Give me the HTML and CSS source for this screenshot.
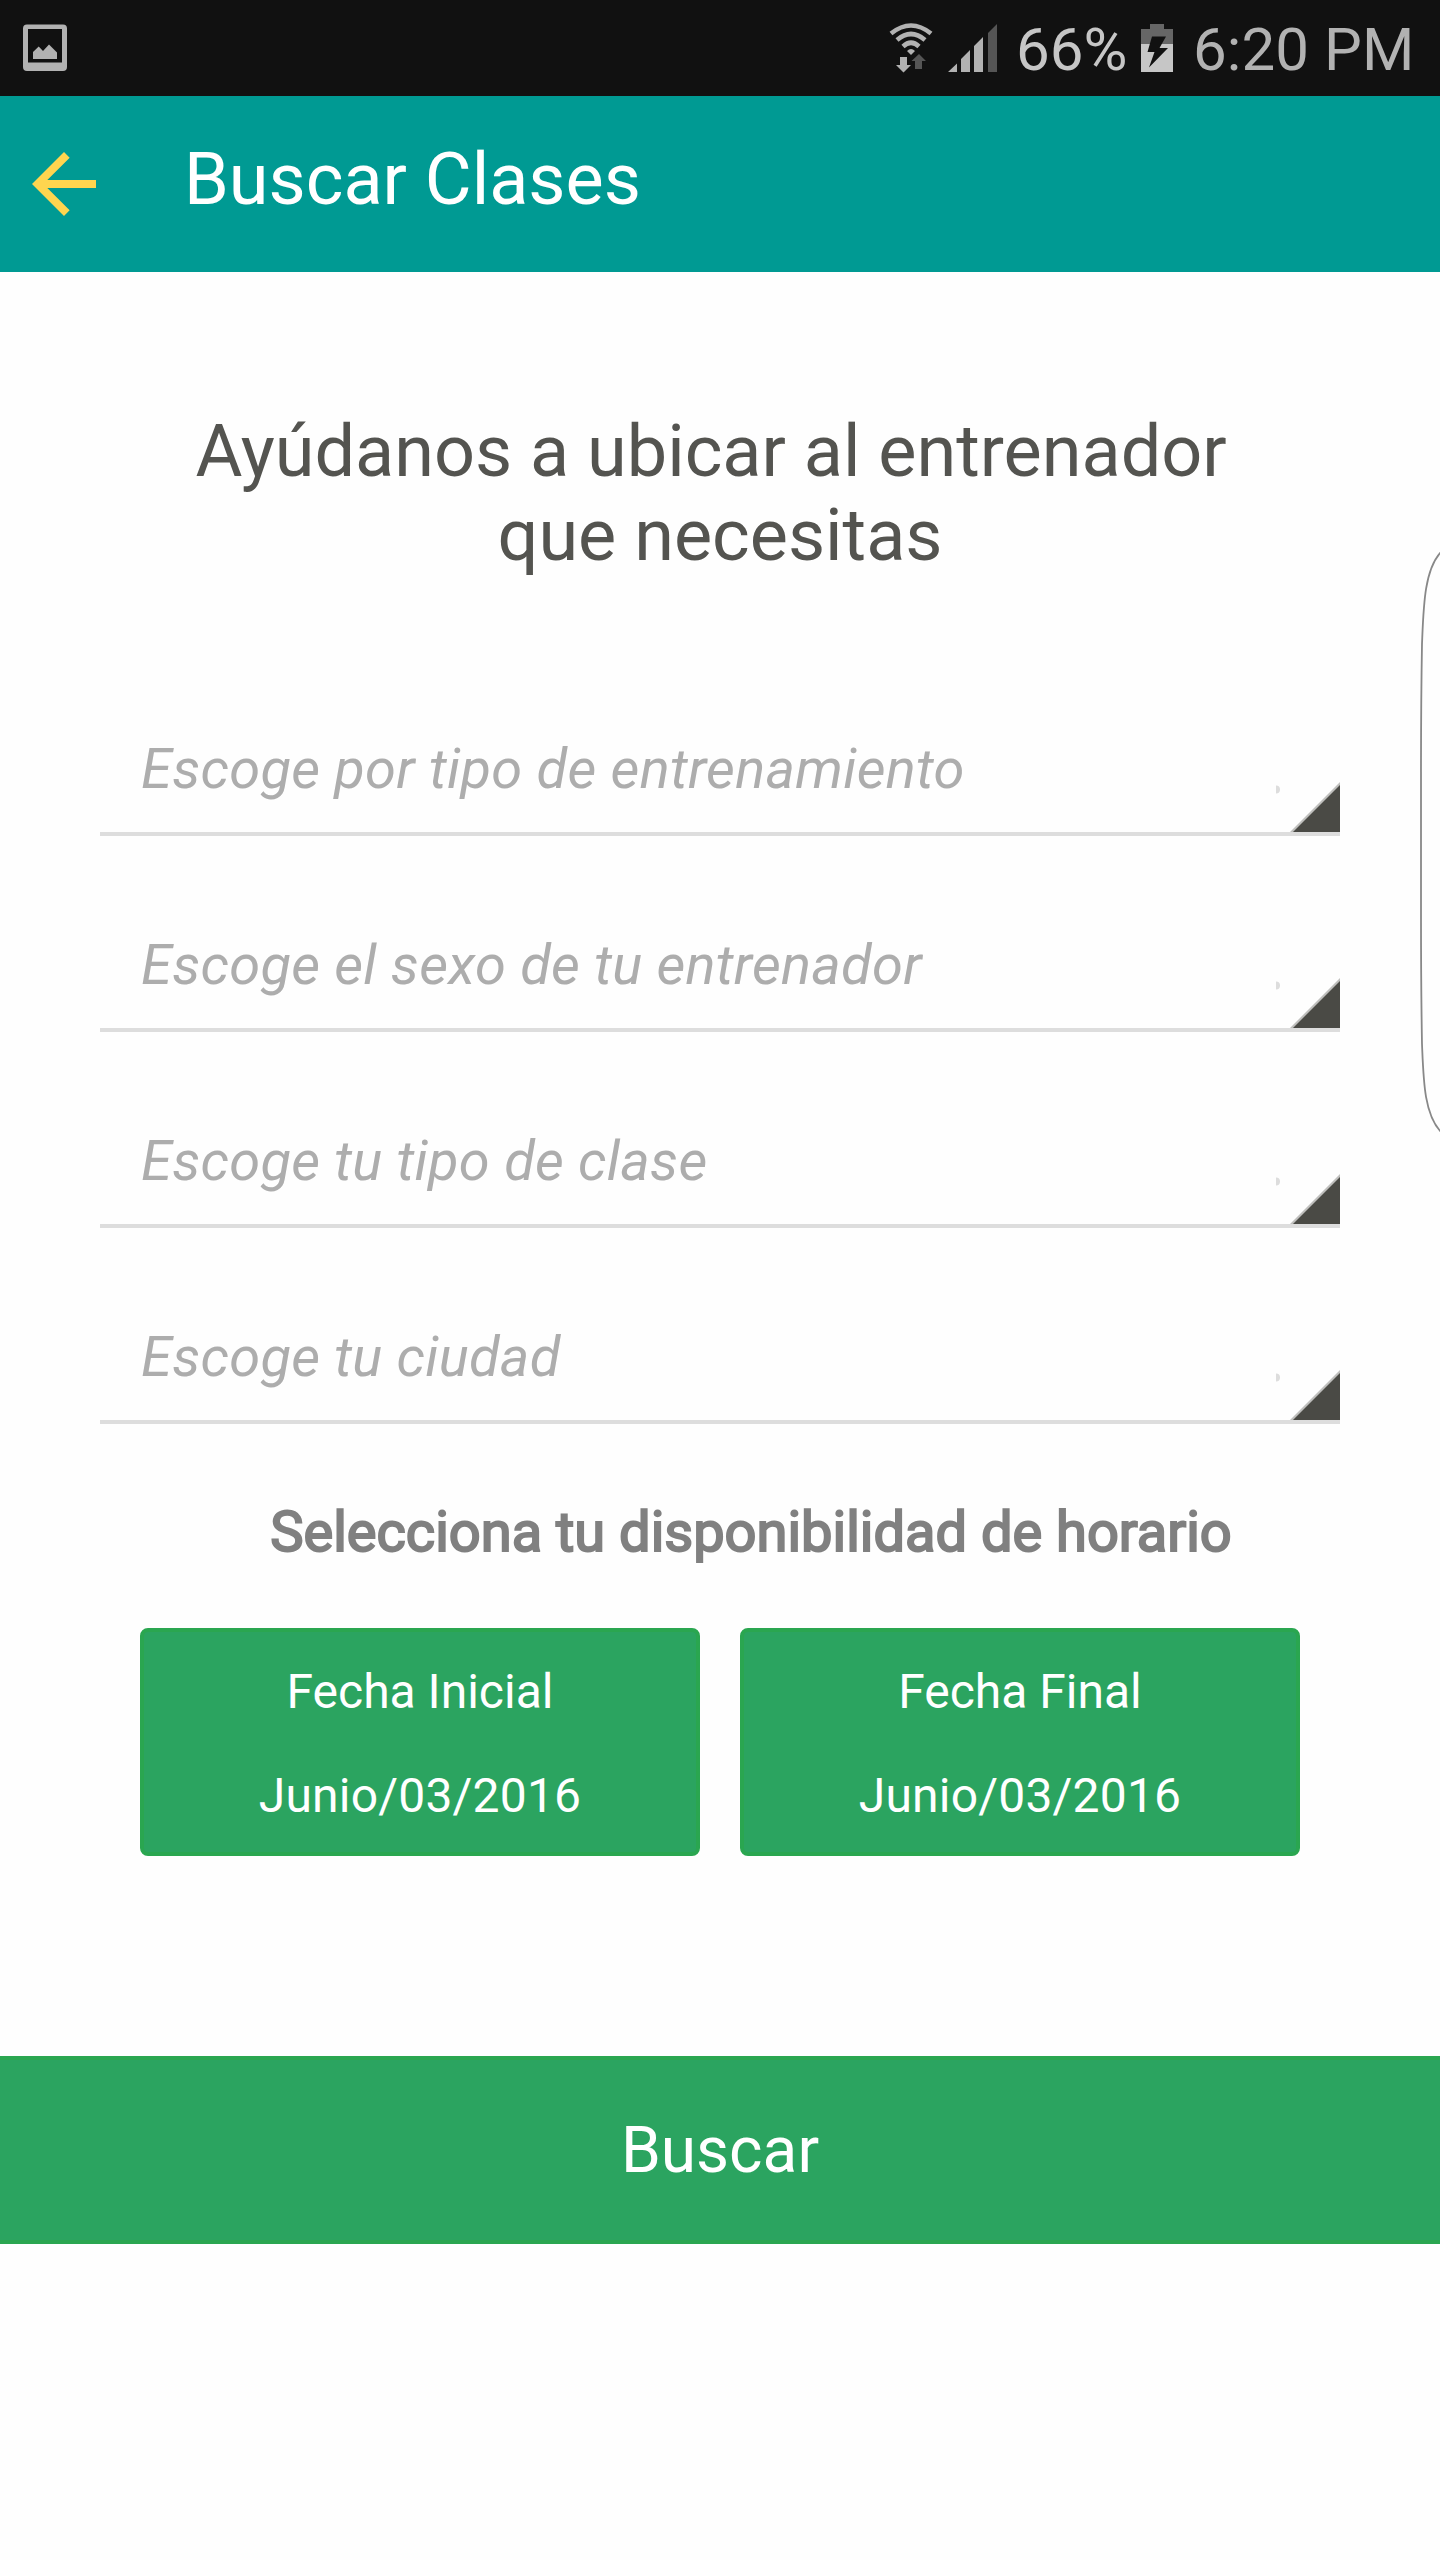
FILE: index.html
```html
<!DOCTYPE html>
<html lang="es">
<head>
<meta charset="utf-8">
<title>Buscar Clases</title>
<link rel="stylesheet" href="styles.css">
</head>
<body>
<div class="status">
  <svg class="status-photo" width="44" height="48" viewBox="0 0 44 48"><path fill="#b2b2b2" fill-rule="evenodd" d="M4 .5H40Q44 .5 44 4.500V43Q44 47 40 47H4Q0 47 0 43V4.500Q0 .5 4 .5ZM5 5V38.500H39V5ZM10 35V28L15.700 22.500 20 27 26 20.500 34 28.500V35Z"/></svg>
  <svg class="status-wifi" width="44" height="52" viewBox="0 0 44 52"><g fill="none" stroke="#b2b2b2" stroke-width="4.600"><path d="M2 11.500Q22-4.500 42 11.500"/><path d="M8 18Q22 6 36 18"/><path d="M14 24.500Q22 17 30 24.500"/></g><path fill="#b2b2b2" d="M18 29Q22 25 26 29L22 33ZM11 35H18V43H22L14.500 50.500 7 43H11Z"/><path fill="#555" d="M30 32L37 39H33V47H26V39H22.500Z"/></svg>
  <svg class="status-signal" width="49" height="48" viewBox="0 0 49 48"><path fill="#b2b2b2" d="M0 48L9 39.500V48ZM13 48V35L22 26V48ZM26 48V22L35 13V48Z"/><path fill="#555" d="M40 48V9L49 0V48Z"/></svg>
  <span class="status-percent">66%</span>
  <svg class="status-battery" width="32" height="48" viewBox="0 0 32 48"><path fill="#666" d="M9 0H23V5H32V20H0V5H9Z"/><path fill="#c6c6c6" d="M0 20H32V48H0Z"/><path fill="#111" d="M11 12.500H25L18.500 24H27L8 43.500 13.500 28H6.500Z"/></svg>
  <span class="status-time">6:20 PM</span>
</div>
<header class="toolbar">
  <svg class="back" width="64" height="64" viewBox="4 4 16 16"><path fill="#ffd54f" d="M20 11H7.830l5.590-5.590L12 4l-8 8 8 8 1.410-1.410L7.830 13H20v-2z"/></svg>
  <h1 class="toolbar-title">Buscar Clases</h1>
</header>
<main>
  <h2 class="intro">Ayúdanos a ubicar al entrenador&nbsp;<br>que necesitas</h2>
  <div class="fields">
    <div class="field"><span>Escoge por tipo de entrenamiento</span><svg class="caret" width="64" height="50" viewBox="0 0 64 50"><use href="#caret"/></svg></div>
    <div class="field"><span>Escoge el sexo de tu entrenador</span><svg class="caret" width="64" height="50" viewBox="0 0 64 50"><use href="#caret"/></svg></div>
    <div class="field"><span>Escoge tu tipo de clase</span><svg class="caret" width="64" height="50" viewBox="0 0 64 50"><use href="#caret"/></svg></div>
    <div class="field"><span>Escoge tu ciudad</span><svg class="caret" width="64" height="50" viewBox="0 0 64 50"><use href="#caret"/></svg></div>
  </div>
  <div class="schedule-label">Selecciona tu disponibilidad de horario</div>
  <div class="dates">
    <button class="date"><span>Fecha Inicial</span><span class="date-value">Junio/03/2016</span></button>
    <button class="date"><span>Fecha Final</span><span class="date-value">Junio/03/2016</span></button>
  </div>
  <button class="search">Buscar</button>
</main>
<svg class="edge-handle" width="22" height="584" viewBox="0 0 22 584"><path fill="none" stroke="#888" stroke-width="1.800" d="M23 0C6 18 5.500 56 4 92Q3 150 3 220V364Q3 434 4 492C5.500 528 6 562 23 580"/></svg>
<svg class="defs" width="0" height="0"><defs><g id="caret"><path fill="#4a4a45" fill-opacity=".35" d="M14 50L64 0V50Z"/><path fill="#4a4a45" d="M17 50L64 3V50Z"/><path fill="#ddd" d="M0 3.500Q4 3.500 4 7.500T0 11.500Z"/></g></defs></svg>
</body>
</html>
```
FILE: styles.css
```css
* { box-sizing: border-box; }
body {
  position: relative;
  margin: 0;
  width: 1440px;
  height: 2560px;
  overflow: hidden;
  background: #fefefe;
  font-family: Roboto, "Noto Sans", sans-serif;
}
svg { display: block; flex: none; }
.status {
  display: flex;
  height: 96px;
  padding: 0 27px 0 23px;
  background: #111;
  color: #b2b2b2;
  font-size: 60px;
  line-height: 100px;
  white-space: nowrap;
}
.status-photo { margin-top: 24px; }
.status-wifi { margin: 22px 0 0 auto; }
.status-signal { margin: 24px 0 0 15px; }
.status-percent { width: 112px; margin-left: 19px; color: #c6c6c6; }
.status-battery { margin: 24px 20px 0 13px; }
.status-time { width: 220px; letter-spacing: 0.1px; }
.toolbar {
  display: flex;
  align-items: center;
  gap: 88px;
  height: 176px;
  padding-left: 32px;
  background: #009a93;
  color: #fff;
}
.toolbar-title {
  margin: 0;
  padding-bottom: 9px;
  font-size: 72px;
  font-weight: 400;
  line-height: 84px;
}
.intro {
  margin: 138px 0 62px;
  color: #545450;
  font-size: 72px;
  font-weight: 400;
  line-height: 84px;
  text-align: center;
}
.fields { padding: 0 100px; }
.field {
  display: flex;
  justify-content: space-between;
  align-items: flex-end;
  height: 196px;
  padding-left: 41px;
  border-bottom: 4px solid #ddd;
  color: #adadad;
  font-size: 56px;
  font-style: italic;
  letter-spacing: 0.27px;
  line-height: 66px;
}
.field span { padding-bottom: 30px; }
.schedule-label {
  margin-top: 75px;
  padding-left: 62px;
  color: #808080;
  font-size: 56px;
  line-height: 66px;
  text-align: center;
  -webkit-text-stroke: 2px #808080;
}
.dates {
  display: grid;
  grid-template-columns: 1fr 1fr;
  gap: 40px;
  padding: 63px 140px 0;
}
button { margin: 0; font-family: inherit; color: #fff; }
.date {
  display: flex;
  flex-direction: column;
  align-items: center;
  gap: 48px;
  height: 228px;
  padding: 32px 0 0;
  border: 4px solid #2aa650;
  border-radius: 8px;
  background: #2ba460;
  font-size: 48px;
  line-height: 56px;
}
.date-value { letter-spacing: 0.2px; }
.search {
  display: block;
  width: 100%;
  height: 188px;
  margin-top: 200px;
  padding: 2px 0 0;
  border: 0 solid #2aa650;
  border-width: 4px 0;
  background: #2ba460;
  font-size: 64px;
  line-height: 178px;
}
.edge-handle { position: absolute; right: 0; top: 552px; }
.defs { position: absolute; }
```
